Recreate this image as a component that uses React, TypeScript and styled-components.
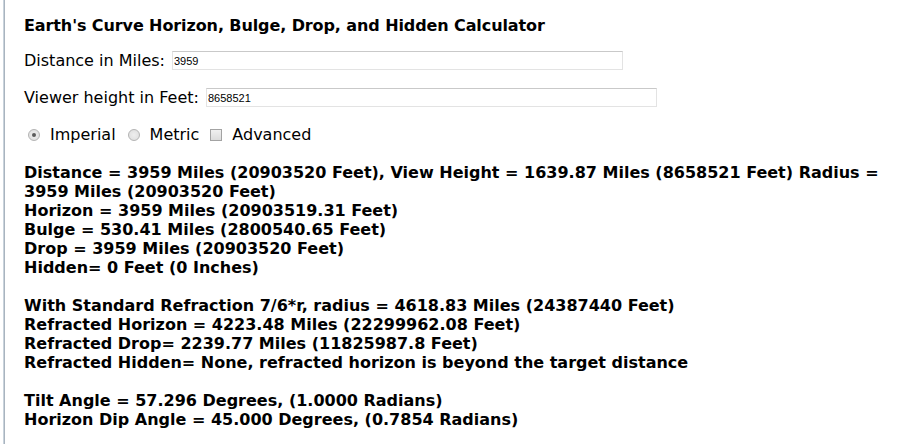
import styled, { createGlobalStyle } from "styled-components";

interface ResultBlock {
  lines: string[];
}

const results: ResultBlock[] = [
  {
    lines: [
      "Distance = 3959 Miles (20903520 Feet), View Height = 1639.87 Miles (8658521 Feet) Radius = 3959 Miles (20903520 Feet)",
      "Horizon = 3959 Miles (20903519.31 Feet)",
      "Bulge = 530.41 Miles (2800540.65 Feet)",
      "Drop = 3959 Miles (20903520 Feet)",
      "Hidden= 0 Feet (0 Inches)",
    ],
  },
  {
    lines: [
      "With Standard Refraction 7/6*r, radius = 4618.83 Miles (24387440 Feet)",
      "Refracted Horizon = 4223.48 Miles (22299962.08 Feet)",
      "Refracted Drop= 2239.77 Miles (11825987.8 Feet)",
      "Refracted Hidden= None, refracted horizon is beyond the target distance",
    ],
  },
  {
    lines: [
      "Tilt Angle = 57.296 Degrees, (1.0000 Radians)",
      "Horizon Dip Angle = 45.000 Degrees, (0.7854 Radians)",
    ],
  },
];

const App = () => {
  return (
    <>
      <GlobalStyle />
      <Page>
        <Title>Earth's Curve Horizon, Bulge, Drop, and Hidden Calculator</Title>
        <FieldRow>
          <label htmlFor="dist">Distance in Miles:</label>
          <TextInput id="dist" defaultValue="3959" />
        </FieldRow>
        <FieldRow>
          <label htmlFor="height">Viewer height in Feet:</label>
          <TextInput id="height" defaultValue="8658521" />
        </FieldRow>
        <OptionRow>
          <Option>
            <Radio type="radio" name="units" defaultChecked />
            Imperial
          </Option>
          <Option>
            <Radio type="radio" name="units" />
            Metric
          </Option>
          <Option>
            <Check type="checkbox" />
            Advanced
          </Option>
        </OptionRow>
        <Results>
          {results.map((block, i) => (
            <Block key={i}>
              {block.lines.map((line, j) => (
                <Line key={j}>{line}</Line>
              ))}
            </Block>
          ))}
        </Results>
      </Page>
    </>
  );
};

export default App;

const GlobalStyle = createGlobalStyle`
  body {
    margin: 0;
    background: #ffffff;
    color: #000000;
    font-family: "DejaVu Sans", Verdana, sans-serif;
    font-size: 16px;
  }
`;

const Page = styled.div`
  margin-left: 3px;
  min-height: 100vh;
  box-sizing: border-box;
  border-left: 1px solid #c9d3dc;
  box-shadow: inset 1px 0 0 #a9b4bf;
  padding: 16px 10px 0 20px;
`;

const Title = styled.div`
  font-family: "DejaVu Sans", Tahoma, sans-serif;
  font-weight: bold;
  font-size: 16px;
  line-height: 19px;
  letter-spacing: -0.1px;
  margin-bottom: 16px;
`;

const FieldRow = styled.div`
  display: flex;
  align-items: center;
  height: 19px;
  line-height: 19px;
  margin-bottom: 18px;
`;

const TextInput = styled.input`
  box-sizing: border-box;
  width: 451px;
  height: 19px;
  margin-left: 7px;
  padding: 0 1px;
  font-family: "Liberation Sans", Arial, sans-serif;
  font-size: 11px;
  color: #000;
  border: 1px solid #e3e3e3;
  border-top-color: #c9c9c9;
  outline: none;
`;

const OptionRow = styled.div`
  display: flex;
  align-items: center;
  gap: 8px;
  height: 19px;
  line-height: 19px;
  margin-bottom: 19px;
`;

const Option = styled.label`
  display: flex;
  align-items: center;
`;

const Radio = styled.input`
  appearance: none;
  box-sizing: border-box;
  width: 12px;
  height: 12px;
  margin: 0 10px 0 4px;
  border: 1px solid #b4b4b4;
  border-radius: 50%;
  background: radial-gradient(circle, #eeeeee 0%, #dcdcdc 100%);
  display: grid;
  place-items: center;

  &:checked::after {
    content: "";
    width: 4px;
    height: 4px;
    border-radius: 50%;
    background: #5a5a5a;
  }
`;

const Check = styled.input`
  appearance: none;
  box-sizing: border-box;
  width: 12px;
  height: 12px;
  margin: 0 10px 0 3px;
  border: 1px solid #a3a3a3;
  background: linear-gradient(#f0f0f0, #dcdcdc);
`;

const Results = styled.div`
  font-weight: bold;
  line-height: 19px;
`;

const Block = styled.div`
  margin-bottom: 19px;
`;

const Line = styled.div``;
